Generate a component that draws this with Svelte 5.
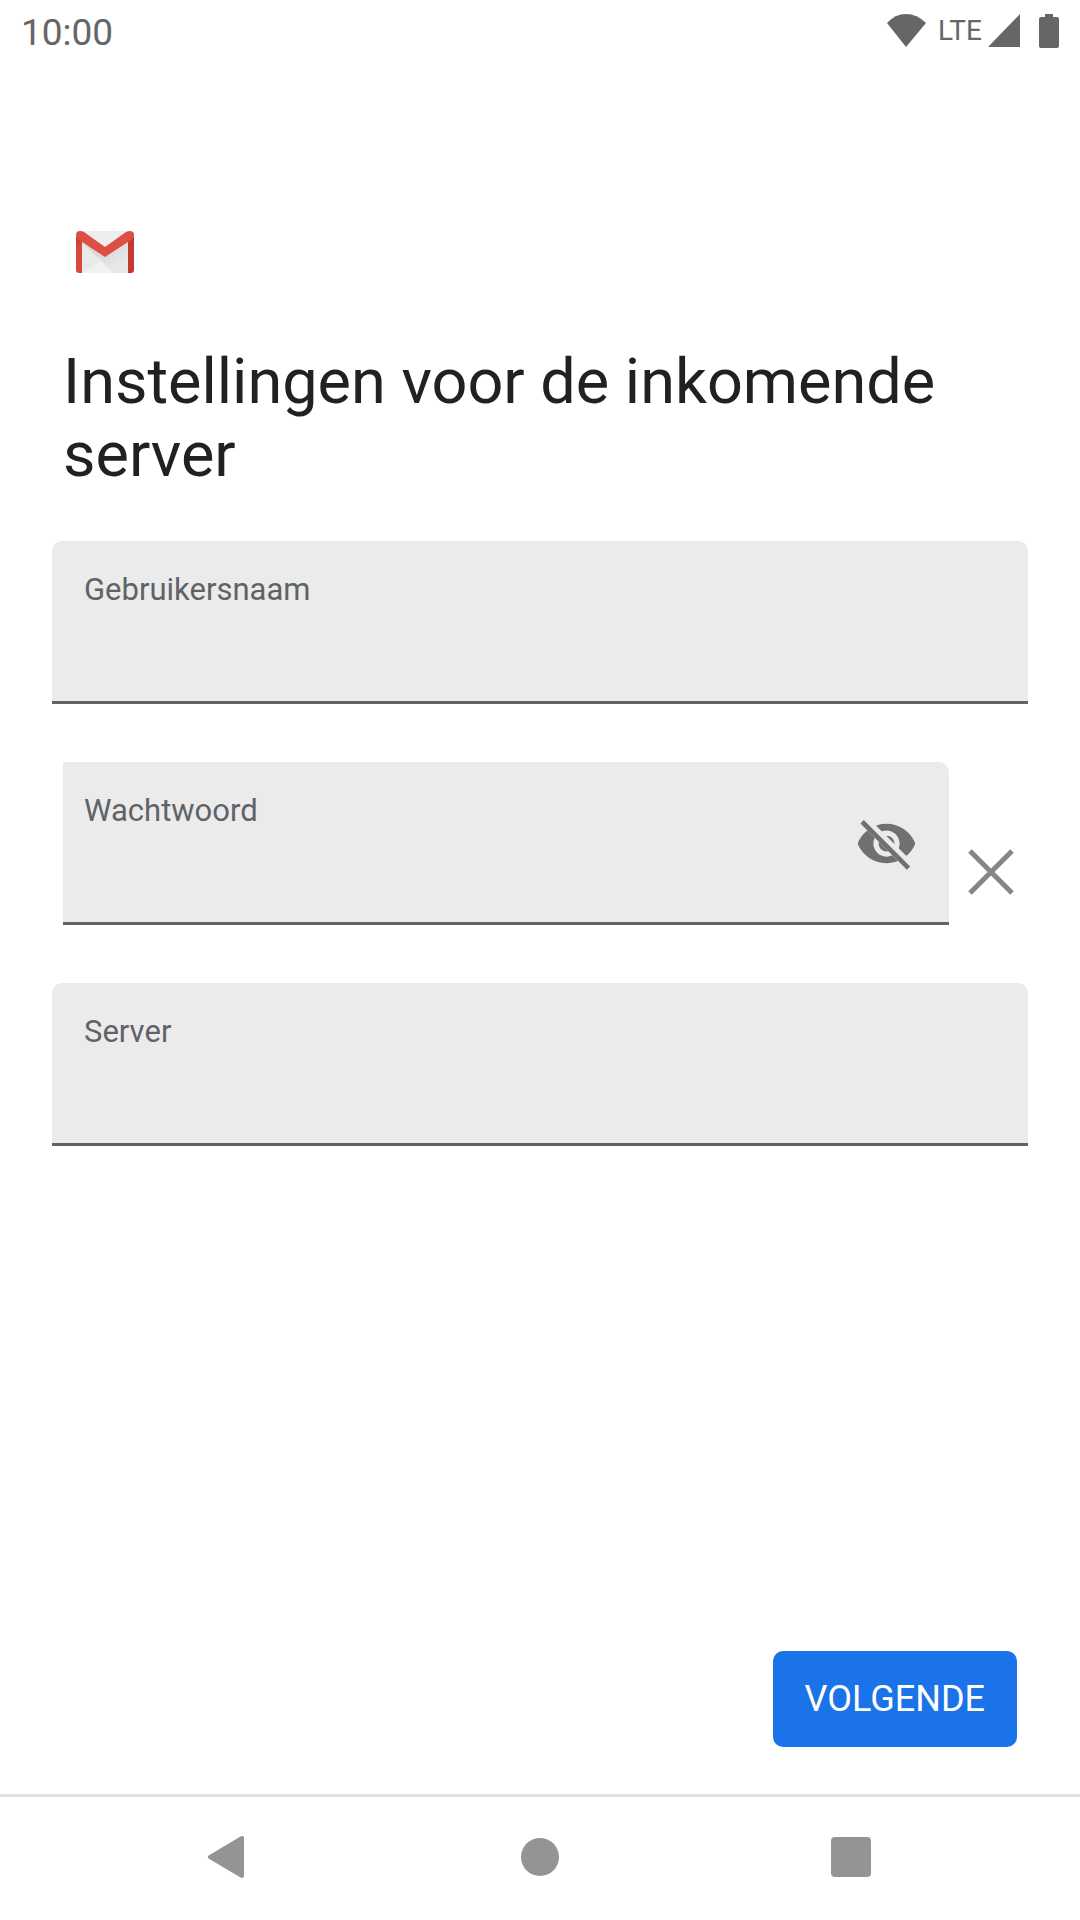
<script>
  let username = $state('');
  let password = $state('');
  let server = $state('');
  let showPassword = $state(false);
</script>

<div class="screen">
  <header class="status">
    <time>10:00</time>
    <div class="indicators">
      <svg width="39" height="34" viewBox="0 0 39 34" aria-hidden="true">
        <path d="M0 9Q8 0 19 0T39 9L19 33Z" />
      </svg>
      <span class="network">LTE</span>
      <svg class="signal" width="32" height="34" viewBox="0 0 32 34" aria-hidden="true">
        <path d="M32 0V33H0Z" />
      </svg>
      <svg width="20" height="34" viewBox="0 0 20 34" aria-hidden="true">
        <path d="M6 0h8v3h4q2 0 2 2v27q0 2-2 2H2q-2 0-2-2V5q0-2 2-2h4Z" />
      </svg>
    </div>
  </header>

  <main>
    <svg class="logo" width="58" height="42" viewBox="0 0 58 42" role="img" aria-label="Gmail">
      <defs>
        <linearGradient id="flap" x1="0" y1="0" x2="1" y2="1">
          <stop offset="0.3" stop-color="#d8d8d8" />
          <stop offset="0.8" stop-color="#e8e8e8" />
        </linearGradient>
        <linearGradient id="side" x1="0" y1="0" x2="0" y2="1">
          <stop offset="0" stop-color="#c23c30" />
          <stop offset="0.3" stop-color="#d8493d" />
        </linearGradient>
      </defs>
      <path fill="#eeeeee" d="M4 0h50v42H4Z" />
      <path fill="#e4e4e4" d="M6 10 25 30 6 42Z" />
      <path fill="url(#flap)" d="M6 10 29 26 52 9V42H37L6 11Z" />
      <path fill="#e9e9e9" d="M6 12 25 30 6 42Z" />
      <path fill="#f2f2f2" d="M6 42 25 30 37 42Z" />
      <path fill="url(#side)" d="M0 5 6 9V42H3q-3 0-3-3Z" />
      <path fill="#c53a2e" d="M58 5 52 9V42h3q3 0 3-3Z" />
      <path fill="#de4f43" d="M0 4q0-4 4-4 2 0 4 1L29 16 50 1q2-1 4-1 4 0 4 4 0 3-3 5L29 26 3 9Q0 7 0 4Z" />
    </svg>

    <h1>Instellingen voor de inkomende server</h1>

    <form id="incoming" onsubmit={(e) => e.preventDefault()}>
      <div class="field">
        <label for="username">Gebruikersnaam</label>
        <input id="username" type="text" autocomplete="username" bind:value={username} />
      </div>

      <div class="row">
        <div class="field joined">
          <div class="entry">
            <label for="password">Wachtwoord</label>
            <input
              id="password"
              type={showPassword ? 'text' : 'password'}
              autocomplete="current-password"
              bind:value={password}
            />
          </div>
          <button
            type="button"
            class="icon"
            aria-label="Wachtwoord weergeven"
            aria-pressed={showPassword}
            onclick={() => (showPassword = !showPassword)}
          >
            <svg width="63" height="63" viewBox="0 0 24 24" aria-hidden="true">
              <clipPath id="beside-strike">
                <path d="M2 4.27 19.73 22 22.27 19.46 4.54 1.73V1H23V23H1V4.27Z" />
              </clipPath>
              <path
                clip-path="url(#beside-strike)"
                fill="#707070"
                d="M12 4.5C7 4.5 2.73 7.61 1 12c1.73 4.39 6 7.5 11 7.5s9.27-3.11 11-7.5c-1.73-4.39-6-7.5-11-7.5zM12 17c-2.76 0-5-2.24-5-5s2.24-5 5-5 5 2.24 5 5-2.24 5-5 5zm0-8c-1.66 0-3 1.34-3 3s1.34 3 3 3 3-1.34 3-3-1.34-3-3-3z"
              />
              <path d="M2.7 3.7 20.4 21.4" stroke="#707070" stroke-width="1.8" />
            </svg>
          </button>
        </div>
        <button type="button" class="icon clear" aria-label="Wachtwoord wissen" onclick={() => (password = '')}>
          <svg width="46" height="46" viewBox="0 0 46 46" aria-hidden="true">
            <path d="M2 2 44 44M44 2 2 44" stroke="#858585" stroke-width="5" />
          </svg>
        </button>
      </div>

      <div class="field">
        <label for="server">Server</label>
        <input id="server" type="text" bind:value={server} />
      </div>
    </form>

    <footer>
      <button type="submit" form="incoming" class="next">VOLGENDE</button>
    </footer>
  </main>

  <nav>
    <button type="button" class="icon" aria-label="Terug">
      <svg width="42" height="42" viewBox="0 0 42 42" aria-hidden="true">
        <path d="M3 21 35 2V40Z" fill="#949494" stroke="#949494" stroke-width="4" stroke-linejoin="round" />
      </svg>
    </button>
    <button type="button" class="icon" aria-label="Startscherm">
      <svg width="42" height="42" viewBox="0 0 42 42" aria-hidden="true">
        <circle cx="21" cy="21" r="19" fill="#949494" />
      </svg>
    </button>
    <button type="button" class="icon" aria-label="Recente apps">
      <svg width="42" height="42" viewBox="0 0 42 42" aria-hidden="true">
        <rect x="0" y="1" width="40" height="40" rx="4" fill="#949494" />
      </svg>
    </button>
  </nav>
</div>

<style>
  :global(body) {
    margin: 0;
    background: #fff;
  }

  .screen {
    display: flex;
    flex-direction: column;
    min-height: 100vh;
    font-family: Roboto, 'Liberation Sans', sans-serif;
    color: #212121;
  }

  .status {
    display: flex;
    justify-content: space-between;
    align-items: center;
    height: 62px;
    padding: 0 21px;
    color: #666;
  }

  time {
    padding-top: 4px;
    font-size: 37px;
    line-height: 44px;
  }

  .indicators {
    display: flex;
    align-items: center;
    fill: #666;
  }

  .network {
    margin: 0 6px 0 12px;
    font-size: 28px;
    line-height: 32px;
  }

  .signal {
    margin-right: 19px;
  }

  svg {
    display: block;
    flex: none;
  }

  main {
    flex: 1;
    display: flex;
    flex-direction: column;
    padding: 169px 52px 47px;
  }

  .logo {
    margin-left: 24px;
  }

  h1 {
    margin: 72px 11px 50px;
    font-size: 63px;
    font-weight: 400;
    line-height: 73px;
  }

  form {
    display: flex;
    flex-direction: column;
    gap: 58px;
  }

  .field {
    box-sizing: border-box;
    height: 163px;
    padding: 30px 32px 0;
    border-bottom: 3px solid #5f6368;
    border-radius: 10px 10px 0 0;
    background: #ebebeb;
  }

  .row {
    display: flex;
    align-items: center;
    padding-left: 11px;
  }

  .joined {
    flex: 1;
    display: flex;
    padding: 30px 31px 0 21px;
    border-radius: 0 10px 0 0;
  }

  .joined .icon {
    align-self: flex-start;
    margin-top: 20px;
  }

  .entry {
    flex: 1;
  }

  label {
    display: block;
    font-size: 31px;
    line-height: 38px;
    color: #5f6368;
  }

  input {
    display: block;
    box-sizing: border-box;
    width: 100%;
    height: 56px;
    padding: 0;
    border: 0;
    outline: 0;
    background: transparent;
    font: inherit;
    font-size: 42px;
    color: #212121;
  }

  button {
    padding: 0;
    border: 0;
    font: inherit;
    cursor: pointer;
  }

  .icon {
    display: grid;
    place-items: center;
    background: transparent;
  }

  .clear {
    width: 79px;
    padding: 56px 0 0 5px;
  }

  footer {
    display: flex;
    justify-content: flex-end;
    margin-top: auto;
    padding-right: 11px;
  }

  .next {
    height: 96px;
    padding: 0 32px;
    border-radius: 10px;
    background: #1a73e8;
    font-size: 36px;
    color: #fff;
  }

  nav {
    display: grid;
    grid-template-columns: repeat(3, 1fr);
    box-sizing: border-box;
    height: 126px;
    padding: 0 72px 3px;
    border-top: 3px solid #e0e0e0;
  }
</style>
